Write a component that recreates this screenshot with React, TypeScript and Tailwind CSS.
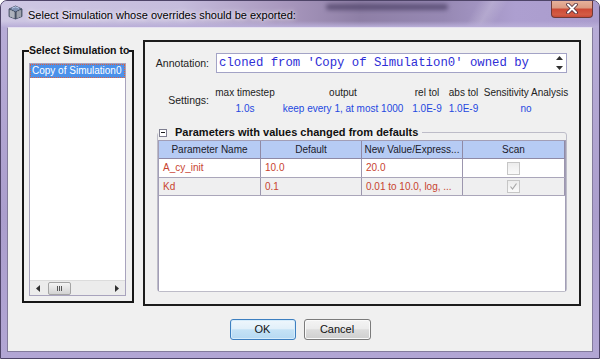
import React from "react";

function TitleIcon() {
  return (
    <svg width="15" height="15" viewBox="0 0 15 15" className="shrink-0">
      <path d="M1 4 L7.5 1 L14 4 L7.5 7 Z" fill="#7d8fb0" stroke="#3f4a60" strokeWidth="0.8" />
      <path d="M1 4 L1 11.5 L7.5 14 L7.5 7 Z" fill="#8a8f9c" stroke="#3f4a60" strokeWidth="0.8" />
      <path d="M14 4 L14 11.5 L7.5 14 L7.5 7 Z" fill="#6d7280" stroke="#3f4a60" strokeWidth="0.8" />
      <path d="M3 5.2 V12 M5 6.1 V12.9 M10 6.1 V12.9 M12 5.2 V12" stroke="#d9dce4" strokeWidth="0.9" />
      <path d="M4 3.2 L7.5 1.8 L11 3.2" stroke="#cfe0ff" strokeWidth="0.8" fill="none" />
    </svg>
  );
}

function CloseButton() {
  return (
    <div className="ml-auto mr-[6px] -mt-px w-[42px] h-[18px] rounded-b-[4px] border border-t-0 border-[#6e3a38] bg-[linear-gradient(180deg,#e9b49e_0%,#dc9c84_45%,#cd4a36_55%,#d35c45_85%,#c84a38_100%)] flex items-center justify-center shrink-0">
      <svg width="12" height="11" viewBox="0 0 12 11">
        <path d="M2 1.5 L10 9.5 M10 1.5 L2 9.5" stroke="#4a2a3a" strokeWidth="3.6" strokeLinecap="round" />
        <path d="M2 1.5 L10 9.5 M10 1.5 L2 9.5" stroke="#ffffff" strokeWidth="2" strokeLinecap="round" />
      </svg>
    </div>
  );
}

function Tri({ dir }: { dir: "up" | "down" | "left" | "right" }) {
  const d =
    dir === "up"
      ? "M0 4 L3.5 0 L7 4 Z"
      : dir === "down"
      ? "M0 0 L7 0 L3.5 4 Z"
      : dir === "left"
      ? "M4 0 L4 7 L0 3.5 Z"
      : "M0 0 L4 3.5 L0 7 Z";
  const w = dir === "up" || dir === "down" ? 7 : 4;
  const h = dir === "up" || dir === "down" ? 4 : 7;
  return (
    <svg width={w} height={h} viewBox={`0 0 ${w} ${h}`}>
      <path d={d} fill="#303030" />
    </svg>
  );
}

function CheckBox({ checked }: { checked?: boolean }) {
  return (
    <div className="w-[13px] h-[13px] border border-[#c6c6c6] bg-[linear-gradient(180deg,#ececec,#fafafa)] flex items-center justify-center">
      {checked && (
        <svg width="9" height="9" viewBox="0 0 9 9">
          <path d="M1.5 4.5 L3.5 7 L7.5 1.5" stroke="#a8a8a8" strokeWidth="1.2" fill="none" />
        </svg>
      )}
    </div>
  );
}

export default function App() {
  return (
    <div className="w-[600px] h-[359px] relative flex flex-col border border-[#4e4468] rounded-t-[7px] bg-[linear-gradient(180deg,#b9aed8_0%,#ab9ecd_60%,#b2a6d4_100%)] overflow-hidden font-['Liberation_Sans',Arial,sans-serif] text-[#1a1a1a]">
      {/* title bar */}
      <div className="relative h-[26px] flex items-start shrink-0 bg-[linear-gradient(90deg,#cec7e3_0%,#c5bcdc_30%,#a998be_47%,#8e7fa6_60%,#9688b3_74%,#ad9fd0_86%,#aa9ccd_100%)]">
        <div className="absolute left-[325px] top-[3px] w-[122px] h-[6px] rounded-full bg-[#3c3156] opacity-60 blur-[2px]" />
        <div className="absolute left-[455px] top-0 w-[60px] h-[26px] bg-[linear-gradient(120deg,transparent_30%,rgba(255,255,255,0.18)_50%,transparent_70%)]" />
        <div className="absolute left-0 right-0 bottom-0 h-[6px] bg-[linear-gradient(180deg,rgba(185,174,216,0)_0%,#b9aed8_100%)]" />
        <div className="relative ml-[7px] mt-[4px]">
          <TitleIcon />
        </div>
        <span className="relative ml-[5px] mt-[7px] text-[11px] leading-[14px] text-black whitespace-nowrap [text-shadow:0_0_6px_#f4f0fa,0_0_3px_#f4f0fa]">
          Select Simulation whose overrides should be exported:
        </span>
        <div className="relative ml-auto flex">
          <CloseButton />
        </div>
      </div>

      {/* client area */}
      <div className="flex-1 mx-[6px] mb-[6px] bg-[#f0f0f0] border border-[#837b9c] border-t-[#e6e2f0] flex flex-col pt-[12px] pl-[14px] pr-[11px] pb-[11px]">
        <div className="flex items-start gap-[9px]">
          {/* left group */}
          <fieldset className="w-[112px] mt-[4px] border-2 border-[#161616] pl-[5px] pr-[6px] pt-[6px] pb-[5px] min-w-0">
            <legend className="whitespace-nowrap text-[10.5px] font-bold leading-[13px] text-[#111]">
              Select Simulation to
            </legend>
            <div className="h-[233px] bg-white border border-[#a8a3bd] flex flex-col">
              <div className="h-[14px] bg-[#4b91ea] border border-dotted border-[#e0603c] text-white text-[10px] leading-[12px] pl-[1px] whitespace-nowrap overflow-hidden">
                Copy of Simulation0
              </div>
              <div className="flex-1" />
              <div className="h-[15px] bg-[#ececec] border-t border-[#dcdcdc] flex items-center">
                <div className="w-[16px] flex justify-center">
                  <Tri dir="left" />
                </div>
                <div className="ml-[2px] w-[23px] h-[13px] rounded-[2px] border border-[#a4a4a4] bg-[linear-gradient(180deg,#f4f4f4_0%,#e4e4e4_50%,#d2d2d2_100%)] flex items-center justify-center gap-[1px]">
                  <div className="w-px h-[5px] bg-[#555]" />
                  <div className="w-px h-[5px] bg-[#555]" />
                  <div className="w-px h-[5px] bg-[#555]" />
                </div>
                <div className="flex-1" />
                <div className="w-[16px] flex justify-center">
                  <Tri dir="right" />
                </div>
              </div>
            </div>
          </fieldset>

          {/* right panel */}
          <div className="w-[438px] h-[266px] border-2 border-[#1c1c1c] flex flex-col">
            <div className="flex items-center mt-[11px]">
              <div className="w-[64px] text-right text-[10.5px] leading-[13px] text-[#222]">Annotation:</div>
              <div className="ml-[7px] w-[351px] h-[20px] bg-white border border-[#a3a3c6] flex items-center">
                <span className="flex-1 pl-[2px] font-['Liberation_Mono',monospace] text-[12.3px] leading-[16px] text-[#2e2ed6] whitespace-nowrap overflow-hidden">
                  cloned from 'Copy of Simulation0' owned by
                </span>
                <div className="w-[13px] h-[18px] flex flex-col items-center justify-between py-[2px]">
                  <Tri dir="up" />
                  <Tri dir="down" />
                </div>
              </div>
            </div>

            <div className="flex items-center mt-[13px]">
              <div className="w-[64px] text-right text-[10.5px] leading-[13px] text-[#222]">Settings:</div>
              <div className="ml-[3px] grid grid-cols-[66px_130px_38px_35px_90px] gap-y-[3px] text-[10px] leading-[13px] text-center whitespace-nowrap">
                <div className="text-[#222]">max timestep</div>
                <div className="text-[#222]">output</div>
                <div className="text-[#222]">rel tol</div>
                <div className="text-[#222]">abs tol</div>
                <div className="text-[#222]">Sensitivity Analysis</div>
                <div className="text-[#2448e0]">1.0s</div>
                <div className="text-[#2448e0]">keep every 1, at most 1000</div>
                <div className="text-[#2448e0]">1.0E-9</div>
                <div className="text-[#2448e0]">1.0E-9</div>
                <div className="text-[#2448e0]">no</div>
              </div>
            </div>

            <fieldset className="mx-[12px] mt-[11px] border border-[#bdbcc8] rounded-[3px] min-w-0 pt-[1px]">
              <legend className="p-0">
                <span className="flex items-center pr-[4px] pl-[1px]">
                  <span className="w-[8px] h-[8px] border border-[#7e7e90] bg-white flex items-center justify-center">
                    <span className="w-[4px] h-px bg-[#202020]" />
                  </span>
                  <span className="ml-[8px] text-[11px] font-bold leading-[13px] text-[#111] whitespace-nowrap">
                    Parameters with values changed from defaults
                  </span>
                </span>
              </legend>
              <div className="h-[151px] bg-white border border-b-0 border-[#a29eb6] flex flex-col">
                <div className="grid grid-cols-[102px_101px_101px_102px] h-[18px] bg-[#b6cbf4] border-b border-[#8f8aa6] text-[10px] leading-[17px] text-[#1a1a2a] text-center">
                  <div className="border-r border-[#8f8aa6]">Parameter Name</div>
                  <div className="border-r border-[#8f8aa6]">Default</div>
                  <div className="border-r border-[#8f8aa6] whitespace-nowrap">New Value/Express...</div>
                  <div className="border-r border-[#8f8aa6]">Scan</div>
                </div>
                <div className="grid grid-cols-[102px_101px_101px_102px] h-[19px] bg-white border-b border-[#aaa6ba] text-[10px] leading-[18px] text-[#c8432f]">
                  <div className="border-r border-[#9c96ae] pl-[4px]">A_cy_init</div>
                  <div className="border-r border-[#9c96ae] pl-[4px]">10.0</div>
                  <div className="border-r border-[#9c96ae] pl-[4px]">20.0</div>
                  <div className="border-r border-[#9c96ae] flex items-center justify-center">
                    <CheckBox />
                  </div>
                </div>
                <div className="grid grid-cols-[102px_101px_101px_102px] h-[18px] bg-[#efeff0] border-b border-[#aaa6ba] text-[10px] leading-[17px] text-[#c8432f]">
                  <div className="border-r border-[#9c96ae] pl-[4px]">Kd</div>
                  <div className="border-r border-[#9c96ae] pl-[4px]">0.1</div>
                  <div className="border-r border-[#9c96ae] pl-[4px] whitespace-nowrap">0.01 to 10.0, log, ...</div>
                  <div className="border-r border-[#9c96ae] flex items-center justify-center">
                    <CheckBox checked />
                  </div>
                </div>
              </div>
            </fieldset>
          </div>
        </div>

        {/* buttons */}
        <div className="mt-[13px] -ml-[14px] -mr-[11px] flex justify-center gap-[8px]">
          <button className="w-[66px] h-[21px] rounded-[3px] border border-[#3d7fc0] bg-[linear-gradient(180deg,#eef6fc_0%,#e2f0fa_45%,#c4e2f6_52%,#b6d9f2_100%)] shadow-[inset_0_0_0_1px_#d6ecfb] text-[11px] leading-[19px] text-[#111]">
            OK
          </button>
          <button className="w-[67px] h-[21px] rounded-[3px] border border-[#7b7b7b] bg-[linear-gradient(180deg,#f4f4f4_0%,#ececec_45%,#dcdcdc_52%,#cfcfcf_100%)] shadow-[inset_0_0_0_1px_#fafafa] text-[11px] leading-[19px] text-[#111]">
            Cancel
          </button>
        </div>
      </div>
    </div>
  );
}
